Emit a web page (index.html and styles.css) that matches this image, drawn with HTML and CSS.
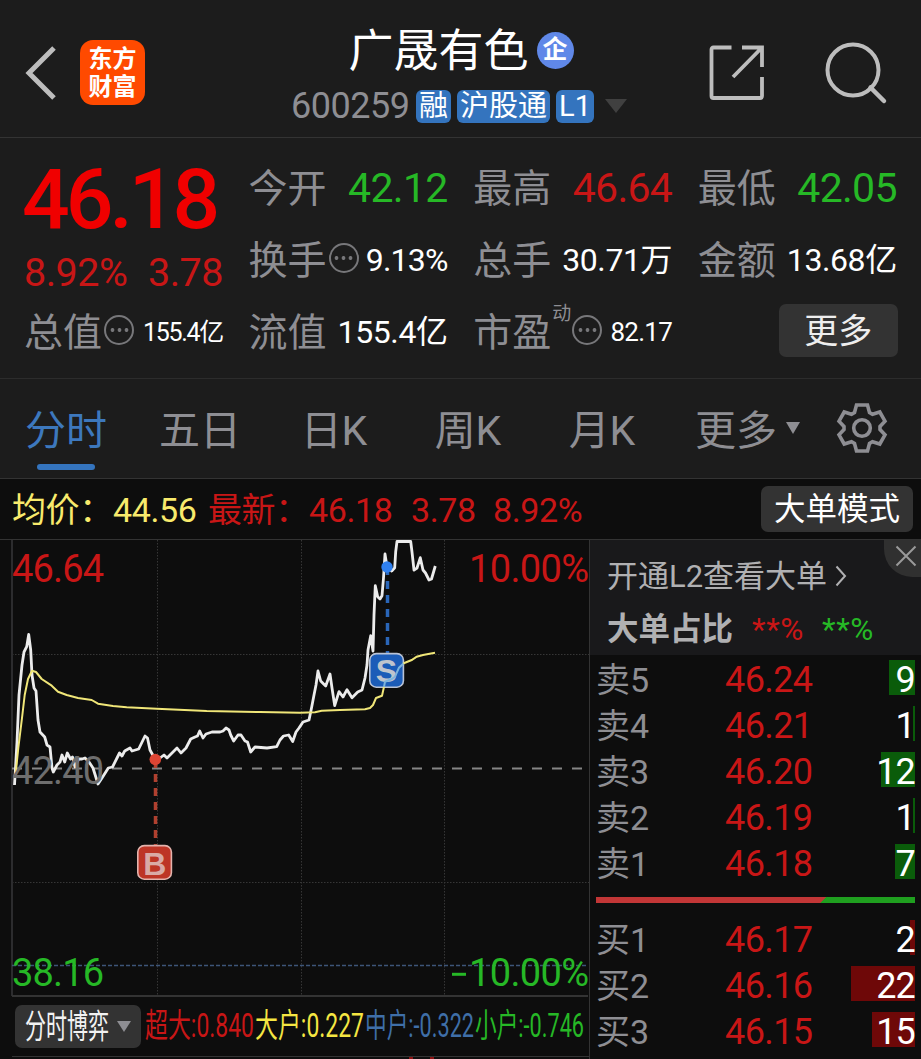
FILE: index.html
```html
<!DOCTYPE html>
<html lang="zh-CN">
<head>
  <meta charset="UTF-8" />
  <meta name="viewport" content="width=device-width, initial-scale=1.0"/>
  <title>广晟有色 600259</title>
  <link rel="stylesheet" href="styles.css">
</head>
<body>

  <header class="topbar">
    <div class="topbar-left">
      <svg class="back" width="32" height="54" viewBox="0 0 32 54"><path d="M29 2 L4 27 L29 52" fill="none" stroke="#bdbdbd" stroke-width="5"/></svg>
      <div class="logo"><span>东方</span><span>财富</span></div>
    </div>
    <div class="topbar-title">
      <div class="name"><h1>广晟有色</h1><span class="corp">企</span></div>
      <div class="code">
        <span class="num">600259</span>
        <span class="tag">融</span>
        <span class="tag tag-wide">沪股通</span>
        <span class="tag tag-l1">L1</span>
        <svg width="22" height="14" viewBox="0 0 22 14"><path d="M0 0 H22 L11 14 Z" fill="#404040"/></svg>
      </div>
    </div>
    <div class="topbar-right">
      <svg width="58" height="58" viewBox="0 0 58 58" fill="none" stroke="#bdbdbd" stroke-width="3.8">
        <path d="M23.500 3.500 H5.500 Q3.500 3.500 3.500 5.500 V52 Q3.500 54 5.500 54 H52 Q54 54 54 52 V33"/>
        <path d="M34 3.500 H54 V23 M54 3.500 L25 33"/>
      </svg>
      <svg width="64" height="64" viewBox="0 0 64 64" fill="none" stroke="#bdbdbd" stroke-width="4">
        <circle cx="29" cy="29" r="25.500"/>
        <path d="M46.500 46.500 L60 60" stroke-width="4.500" stroke-linecap="round"/>
      </svg>
    </div>
  </header>

  <section class="quote">
    <div class="last">
      <div class="price">46.18</div>
      <div class="change"><span>8.92%</span><span>3.78</span></div>
    </div>
    <div class="stat"><label>今开</label><b class="big down">42.12</b></div>
    <div class="stat"><label>最高</label><b class="big up">46.64</b></div>
    <div class="stat"><label>最低</label><b class="big down">42.05</b></div>

    <div class="stat"><label>换手</label><i class="dots"></i><b class="pct">9.13%</b></div>
    <div class="stat"><label>总手</label><b>30.71万</b></div>
    <div class="stat"><label>金额</label><b>13.68亿</b></div>

    <div class="stat"><label>总值</label><i class="dots"></i><b class="small">155.4亿</b></div>
    <div class="stat"><label>流值</label><b>155.4亿</b></div>
    <div class="stat"><label>市盈</label><sup>动</sup><i class="dots"></i><b class="small pe">82.17</b></div>
    <div class="stat"><button class="more">更多</button></div>
  </section>

  <nav class="tabs">
    <a class="active">分时</a>
    <a>五日</a>
    <a>日K</a>
    <a>周K</a>
    <a>月K</a>
    <a>更多<svg class="caret" width="14" height="12" viewBox="0 0 14 12"><path d="M0 0 H14 L7 12 Z" fill="#8e8e93"/></svg></a>
    <svg class="gear" width="52" height="52" viewBox="-26 -26 52 52" fill="none" stroke="#8e8e93" stroke-width="3.600">
      <path d="M-5.500 -23 H5.500 L7.500 -15.500 L10.500 -13.800 L17.800 -16 L23 -6.800 L18 -1.500 V1.500 L23 6.800 L17.800 16 L10.500 13.800 L7.500 15.500 L5.500 23 H-5.500 L-7.500 15.500 L-10.500 13.800 L-17.800 16 L-23 6.800 L-18 1.500 V-1.500 L-23 -6.800 L-17.800 -16 L-10.500 -13.800 L-7.500 -15.500 Z"/>
      <circle r="8.300"/>
    </svg>
  </nav>

  <div class="infobar">
    <span class="avg">均价：</span><span class="avg">44.56</span>
    <span class="up">最新：</span><span class="up">46.18</span><span class="up">3.78</span><span class="up">8.92%</span>
    <button class="mode">大单模式</button>
  </div>

  <main class="board">
    <section class="chart">
      <svg width="589" height="457" viewBox="0 540 589 457" fill="none">
        <!-- grid -->
        <g stroke="#363636" stroke-dasharray="1.500 1.500">
          <path d="M157.500 540 V996 M301.500 540 V996 M444.500 540 V996"/>
          <path d="M12 654.500 H589 M12 882.500 H589"/>
        </g>
        <path d="M12 540 V996" stroke="#2c2c2e" stroke-width="2"/>
        <path d="M12 996 H588" stroke="#333" stroke-width="2"/>
        <path d="M12 768.500 H583" stroke="#858585" stroke-width="1.800" stroke-dasharray="10 10"/>
        <path d="M12 965.500 H588" stroke="#3d5578" stroke-width="1.500" stroke-dasharray="4 2"/>

        <!-- price -->
        <path stroke="#ececec" stroke-width="2.800" stroke-linejoin="round" d="M14.500 785 L17 742 L19 695 L22 665 L24 652 L26.700 646.700 L28.700 634.500 L30.700 650 L32 675 L34 688 L36 691 L38 720 L40 732 L44.700 737 L47 745 L50 747 L52 768 L53.300 772 L57 765 L60 762 L62 755 L64.700 762 L67.300 753 L70.500 759 L72.500 757 L75 767 L78.700 759 L82 759 L85 758 L89 762 L93 768 L98 784 L102 778 L108.300 768 L112.500 767 L117 758 L119.500 753 L122 756 L124.700 751 L130 748 L132 751 L138.700 749 L145 736 L147.500 738 L150 750 L155 759 L160 758 L164 755 L167 758 L173 752 L177 748 L181 753 L186 748 L190.700 739 L195 737 L197.500 736 L199.700 731 L203 738 L206 734 L212 732 L220 732 L223 731 L226 728 L229 730 L230.700 735 L233.700 741 L238 735 L241 735 L245 741 L247.500 742 L250.700 752 L255 747 L267 748 L276.700 746.700 L280 740 L283.500 736 L288.700 735 L292.700 741.500 L296 732 L299 728 L303 722 L309 720 L311.700 707 L314 695 L316 685 L318 671 L320.700 681 L325.700 686 L330 674 L332 688 L334.700 705.500 L339 691.700 L343 697 L347 689.700 L352 697.700 L357.700 692 L362 690 L365 678 L367 665 L368 650 L370.700 635.700 L373 651 L374 615 L375.300 585.700 L377.700 596.700 L380 599 L382 595.700 L383.500 578 L385 554 L386.700 565 L391.700 571 L394.700 567.700 L395.700 551.700 L397 541.500 L410.700 541.500 L412 552 L414 570 L417 568 L420.300 557.700 L423 570 L425.500 573 L429 580 L431.500 579 L435.300 566"/>

        <!-- sell / buy marks -->
        <path d="M387.500 572 V653" stroke="#2a66b8" stroke-width="3.500" stroke-dasharray="8 6" stroke-dashoffset="-9"/>
        <circle cx="387" cy="567" r="5.700" fill="#2f80f0"/>
        <path d="M155.500 760 V845" stroke="#b0402f" stroke-width="3.500" stroke-dasharray="8 6"/>
        <circle cx="155.300" cy="759.500" r="5.800" fill="#dd4534"/>
        <rect x="369.800" y="653.600" width="33.600" height="33.600" rx="6.500" fill="#1b5cb8" stroke="#b9c3d6" stroke-width="1.600"/>
        <rect x="137.800" y="845.600" width="33.600" height="33.600" rx="6.500" fill="#bd3526" stroke="#e3b3ad" stroke-width="1.600"/>
        <text class="mark" x="386.500" y="682" fill="#bfc4cd">S</text>
        <text class="mark" x="154.800" y="874.500" fill="#d9aaa6">B</text>

        <!-- average -->
        <path stroke="#f0e678" stroke-width="2" stroke-linejoin="round" d="M15.300 777 L18.300 748 L22 718 L24.700 695 L28 679 L32 670.700 L36 672 L41.700 679 L51.700 685.700 L58 691.700 L66.700 695 L78 698 L91.700 700 L98 703.700 L113 706 L126.700 707.300 L156.700 708.700 L206.700 711 L260 712 L300 712.700 L315 712.300 L321.700 710.700 L340 710 L365 709.300 L370 708 L373 705 L376 698 L382 695.700 L384 686.700"/>
        <path stroke="#7db4dc" stroke-width="2" d="M384 686.700 L385 681.700 L391.700 679 L395 676.700 L399 667.700 L403.500 663.500"/>
        <path stroke="#f0e678" stroke-width="2" d="M403.500 663.500 L405 662.700 L411.700 660 L416.700 656.700 L423 655 L435 652.700"/>

        <!-- axis labels -->
        <g class="axis">
          <text x="12" y="582" textLength="92" fill="#c81616">46.64</text>
          <text x="469" y="582" textLength="120" fill="#c81616">10.00%</text>
          <text x="12" y="784" textLength="92" fill="#6e6e6e">42.40</text>
          <text x="12" y="986" textLength="92" fill="#26b826">38.16</text>
          <text x="469" y="986" textLength="120" fill="#26b826">10.00%</text>
          <path d="M452 974.300 H466" stroke="#26b826" stroke-width="3"/>
        </g>
      </svg>

      <div class="indicator">
        <div class="picker">
          <svg width="86" height="42" viewBox="0 0 86 42"><text x="0" y="32" textLength="84" lengthAdjust="spacingAndGlyphs" fill="#f2f2f2">分时博弈</text></svg>
          <svg width="14" height="11" viewBox="0 0 14 11"><path d="M0 0 H14 L7 11 Z" fill="#8e8e93"/></svg>
        </div>
        <svg class="flows" width="444" height="42" viewBox="0 0 444 42">
          <text x="0" y="32" textLength="109" lengthAdjust="spacingAndGlyphs" fill="#c81616">超大:0.840</text>
          <text x="110" y="32" textLength="109" lengthAdjust="spacingAndGlyphs" fill="#f5e642">大户:0.227</text>
          <text x="220" y="32" textLength="109" lengthAdjust="spacingAndGlyphs" fill="#3f6fa8">中户:-0.322</text>
          <text x="330" y="32" textLength="109" lengthAdjust="spacingAndGlyphs" fill="#26b826">小户:-0.746</text>
        </svg>
      </div>
      <div class="subchart"><i></i><i></i></div>
    </section>

    <aside class="depth">
      <div class="l2">
        <div class="l2-link">开通L2查看大单<svg width="12" height="22" viewBox="0 0 12 22"><path d="M1.500 1.500 L10 11 L1.500 20.500" fill="none" stroke="#b0b0b2" stroke-width="2"/></svg></div>
        <div class="l2-ratio"><strong>大单占比</strong><span class="up">**%</span><span class="ok">**%</span></div>
        <div class="close"><svg width="22" height="22" viewBox="0 0 22 22"><path d="M1.500 1.500 L20.500 20.500 M20.500 1.500 L1.500 20.500" stroke="#9a9a9a" stroke-width="2"/></svg></div>
      </div>
      <ul class="asks">
        <li><span>卖5</span><em>46.24</em><div class="vol"><i style="width: 26px"></i><b>9</b></div></li>
        <li><span>卖4</span><em>46.21</em><div class="vol"><i style="width: 2px"></i><b>1</b></div></li>
        <li><span>卖3</span><em>46.20</em><div class="vol"><i style="width: 34px"></i><b>12</b></div></li>
        <li><span>卖2</span><em>46.19</em><div class="vol"><i style="width: 2px"></i><b>1</b></div></li>
        <li><span>卖1</span><em>46.18</em><div class="vol"><i style="width: 20px"></i><b>7</b></div></li>
      </ul>
      <div class="ratio"></div>
      <ul class="bids">
        <li><span>买1</span><em>46.17</em><div class="vol"><i style="width: 5px"></i><b>2</b></div></li>
        <li><span>买2</span><em>46.16</em><div class="vol"><i style="width: 64px"></i><b>22</b></div></li>
        <li><span>买3</span><em>46.15</em><div class="vol"><i style="width: 43px"></i><b>15</b></div></li>
      </ul>
    </aside>
  </main>

</body>
</html>
```
FILE: styles.css
```css
* {
  box-sizing: border-box;
}

body {
  margin: 0;
  width: 921px;
  height: 1059px;
  overflow: hidden;
  background: #0d0d0d;
  color: #fff;
  font-family: Roboto, "Noto Sans CJK SC", sans-serif;
  line-height: 1;
  white-space: nowrap;
}

svg {
  display: block;
  flex: none;
}

ul {
  list-style: none;
  margin: 0;
  padding: 0;
}

i, em {
  font-style: normal;
}

button {
  border: none;
  padding: 0;
  font-family: inherit;
  line-height: 1;
  background: #333;
  color: #eee;
  border-radius: 7px;
}

.up {
  color: #c81616;
}

.down,
.ok {
  color: #26b826;
}

/* top bar */
.topbar {
  display: grid;
  grid-template-columns: 291px 336px 1fr;
  height: 138px;
  background: #1c1c1c;
  border-bottom: 1px solid #333;
}

.topbar-left {
  display: flex;
  align-items: center;
  gap: 23px;
  padding: 8px 0 0 25px;
}

.logo {
  width: 65px;
  height: 65px;
  border-radius: 13px;
  background: #ff4a00;
  display: flex;
  flex-direction: column;
  align-items: center;
  justify-content: center;
  gap: 4px;
  font-size: 24px;
  font-weight: 700;
}

.name {
  display: flex;
  align-items: center;
  justify-content: center;
  gap: 8px;
  height: 46px;
  margin-top: 27px;
  padding-left: 4px;
}

.name h1 {
  margin: 0;
  padding-top: 3px;
  font-size: 45px;
  font-weight: 400;
}

.corp {
  width: 37px;
  height: 37px;
  border-radius: 50%;
  background: #6088e8;
  font-size: 25px;
  font-weight: 700;
  line-height: 36px;
  text-align: center;
}

.code {
  display: flex;
  align-items: center;
  gap: 6px;
  height: 34px;
  margin-top: 16px;
}

.code .num {
  width: 119px;
  color: #8e8e93;
  font-size: 36px;
  letter-spacing: -0.5px;
}

.code svg {
  margin-left: 5px;
}

.tag {
  width: 35px;
  height: 33px;
  border-radius: 6px;
  background: #3474be;
  font-size: 29px;
  line-height: 33px;
  text-align: center;
}

.tag-wide {
  width: 93px;
}

.tag-l1 {
  width: 38px;
}

.topbar-right {
  display: flex;
  align-items: center;
  gap: 58px;
  padding: 8px 0 0 81px;
}

/* quote */
.quote {
  display: grid;
  grid-template-columns: repeat(4, 199px);
  grid-template-rows: repeat(3, 72px);
  column-gap: 25.6px;
  height: 241px;
  padding: 14px 0 0 24px;
  background: #1c1c1c;
  border-bottom: 1px solid #2c2c2c;
}

.last {
  grid-row: span 2;
}

.price {
  height: 84px;
  margin: 6px 0 0 -2px;
  color: #f00000;
  font-size: 84px;
  font-weight: 500;
  letter-spacing: -4px;
}

.change {
  display: flex;
  justify-content: space-between;
  margin-top: 11px;
  color: #c81616;
  font-size: 39.5px;
  letter-spacing: -0.5px;
}

.stat {
  display: flex;
  align-items: center;
  justify-content: space-between;
}

.stat label {
  padding-top: 2px;
  color: #8e8e93;
  font-size: 39px;
}

.stat b {
  font-size: 32px;
  font-weight: 400;
  letter-spacing: -0.4px;
}

.stat b.pct {
  letter-spacing: -0.8px;
}

.stat b.big {
  font-size: 41px;
  letter-spacing: -0.7px;
}

.stat b.small {
  font-size: 25px;
  letter-spacing: -1.3px;
}

.stat b.pe {
  font-size: 26px;
  letter-spacing: -0.7px;
}

.dots {
  width: 30px;
  height: 30px;
  margin: -5px auto 0 2px;
  border: 2px solid #77777a;
  border-radius: 50%;
  background: radial-gradient(circle, #77777a 1.6px, transparent 2.2px) center / 7px 26px repeat-x;
  background-clip: content-box;
  padding: 0 2.5px;
}

.stat sup {
  align-self: flex-start;
  margin: 8px 0 0 1px;
  color: #8e8e93;
  font-size: 19px;
}

.stat sup + .dots {
  margin-left: 1px;
}

.more {
  width: 119px;
  height: 53px;
  margin: -4px -1px 0 auto;
  padding-top: 1px;
  font-size: 34px;
}

/* tabs */
.tabs {
  display: grid;
  grid-template-columns: repeat(6, 134px) 1fr;
  height: 100px;
  background: #1c1c1c;
  border-bottom: 1px solid #333;
}

.tabs a {
  position: relative;
  padding-right: 2px;
  color: #8e8e93;
  font-size: 41px;
  line-height: 104px;
  text-align: center;
}

.tabs .active {
  color: #3d78bd;
}

.tabs .active::after {
  content: "";
  position: absolute;
  left: 37px;
  top: 85px;
  width: 58px;
  height: 6px;
  border-radius: 3px;
  background: #3474be;
}

.caret {
  position: absolute;
  left: 116px;
  top: 43px;
}

.gear {
  margin: 23px 0 0 32px;
}

/* info bar */
.infobar {
  display: grid;
  grid-template-columns: 101px 95px 101px 102px 82px 1fr 161px;
  align-items: center;
  height: 61px;
  padding-left: 12px;
  border-bottom: 1px solid #333;
  font-size: 34px;
  letter-spacing: -0.4px;
}

.infobar span {
  padding-top: 1px;
}

.avg {
  color: #f8ea6c;
}

.mode {
  width: 152px;
  height: 46px;
  padding-top: 2px;
  margin-left: 1px;
  color: #fff;
  font-size: 31.5px;
  letter-spacing: 0;
}

/* chart */
.board {
  display: grid;
  grid-template-columns: 589px 332px;
  height: 519px;
}

.axis {
  font-size: 38px;
}

.mark {
  font-family: "Liberation Sans", Arial, sans-serif;
  font-size: 32px;
  font-weight: 700;
  text-anchor: middle;
}

.indicator {
  display: flex;
  gap: 4px;
  height: 59px;
  padding: 8px 0 0 15px;
  font-size: 33px;
}

.indicator svg {
  overflow: visible;
}

.picker {
  display: flex;
  align-items: center;
  gap: 6px;
  width: 126px;
  height: 43px;
  padding-left: 10px;
  border-radius: 7px;
  background: #333;
}

.subchart {
  display: flex;
  gap: 17px;
  height: 3px;
  margin-left: 12px;
  padding-left: 397px;
  border-top: 1px solid #333;
}

.subchart i {
  width: 4px;
  height: 2px;
  background: #8a1212;
}

/* depth */
.depth {
  border-left: 1px solid #333;
}

.l2 {
  position: relative;
  height: 115px;
  padding: 19px 0 0 17px;
  background: #19191b;
  color: #b0b0b2;
}

.l2-link {
  display: flex;
  align-items: center;
  gap: 8px;
  height: 34px;
  font-size: 31px;
}

.l2-ratio {
  display: flex;
  align-items: center;
  height: 34px;
  margin-top: 20px;
  font-size: 31.5px;
}

.l2-ratio span {
  width: 52px;
  margin-left: 18px;
  letter-spacing: 0.6px;
}

.l2-ratio strong {
  margin-right: 1px;
}

.close {
  position: absolute;
  top: 0;
  right: 0;
  width: 37px;
  height: 37px;
  padding: 5px 0 0 11px;
  border-bottom-left-radius: 28px;
  background: #303030;
}

.depth ul {
  padding: 2px 6px 0 7px;
}

.depth li {
  display: grid;
  grid-template-columns: 128px 1fr 80px;
  align-items: center;
  height: 46px;
}

.depth li span {
  color: #8e8e93;
  font-size: 34px;
  margin-left: -1px;
}

.depth li em {
  color: #c81616;
  font-size: 36px;
  letter-spacing: -0.6px;
}

/* volume bar sits under the number in the same grid cell */
.vol {
  display: grid;
  justify-items: end;
  align-self: start;
  padding-top: 3px;
}

.vol i,
.vol b {
  grid-area: 1 / 1;
  height: 35px;
}

.vol i {
  background: #0a5c0a;
}

.bids .vol i {
  background: #6e0808;
}

.vol b {
  font-size: 36px;
  font-weight: 400;
  letter-spacing: -0.8px;
  line-height: 40px;
}

.ratio {
  height: 6px;
  margin: 10px 6px 12px;
  background: linear-gradient(135deg, #c23636 162.5px, #1f9f1f 163px);
}
```
